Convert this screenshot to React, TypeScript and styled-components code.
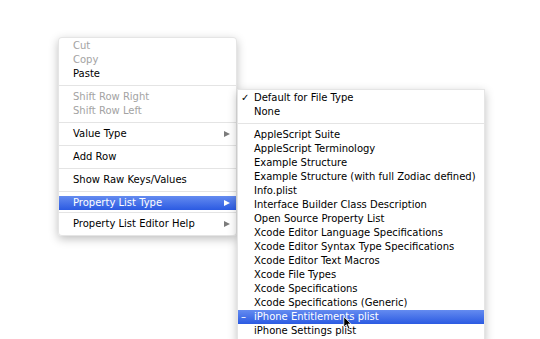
import styled, { createGlobalStyle } from "styled-components";

const GlobalStyle = createGlobalStyle`
  html, body {
    margin: 0;
    padding: 0;
    background: #fff;
  }
  body {
    font-family: "DejaVu Sans", Verdana, sans-serif;
  }
`;

type Entry =
  | { kind: "sep"; tight?: boolean }
  | {
      kind: "item";
      label: string;
      disabled?: boolean;
      active?: boolean;
      submenu?: boolean;
      mark?: string;
    };

const editMenu: Entry[] = [
  { kind: "item", label: "Cut", disabled: true },
  { kind: "item", label: "Copy", disabled: true },
  { kind: "item", label: "Paste" },
  { kind: "sep" },
  { kind: "item", label: "Shift Row Right", disabled: true },
  { kind: "item", label: "Shift Row Left", disabled: true },
  { kind: "sep" },
  { kind: "item", label: "Value Type", submenu: true },
  { kind: "sep" },
  { kind: "item", label: "Add Row" },
  { kind: "sep" },
  { kind: "item", label: "Show Raw Keys/Values" },
  { kind: "sep" },
  { kind: "item", label: "Property List Type", submenu: true, active: true },
  { kind: "sep", tight: true },
  { kind: "item", label: "Property List Editor Help", submenu: true },
];

const typeMenu: Entry[] = [
  { kind: "item", label: "Default for File Type", mark: "✓" },
  { kind: "item", label: "None" },
  { kind: "sep" },
  { kind: "item", label: "AppleScript Suite" },
  { kind: "item", label: "AppleScript Terminology" },
  { kind: "item", label: "Example Structure" },
  { kind: "item", label: "Example Structure (with full Zodiac defined)" },
  { kind: "item", label: "Info.plist" },
  { kind: "item", label: "Interface Builder Class Description" },
  { kind: "item", label: "Open Source Property List" },
  { kind: "item", label: "Xcode Editor Language Specifications" },
  { kind: "item", label: "Xcode Editor Syntax Type Specifications" },
  { kind: "item", label: "Xcode Editor Text Macros" },
  { kind: "item", label: "Xcode File Types" },
  { kind: "item", label: "Xcode Specifications" },
  { kind: "item", label: "Xcode Specifications (Generic)" },
  { kind: "item", label: "iPhone Entitlements plist", mark: "–", active: true },
  { kind: "item", label: "iPhone Settings plist" },
];

export default function App() {
  return (
    <>
      <GlobalStyle />
      <Stage>
        <Menu $x={58} $y={37} $w={179} $round>
          {editMenu.map((e, i) =>
            e.kind === "sep" ? (
              <Separator key={i} $tight={e.tight} />
            ) : (
              <Item key={i} $disabled={e.disabled} $active={e.active} $pad={14}>
                <Label>{e.label}</Label>
                {e.submenu && <Arrow $active={e.active} />}
              </Item>
            )
          )}
        </Menu>
        <Menu $x={237} $y={89} $w={248}>
          {typeMenu.map((e, i) =>
            e.kind === "sep" ? (
              <Separator key={i} />
            ) : (
              <Item key={i} $active={e.active} $pad={3}>
                <Mark>{e.mark}</Mark>
                <Label>{e.label}</Label>
              </Item>
            )
          )}
        </Menu>
        <Cursor viewBox="0 0 12 19" width="9" height="14">
          <path
            d="M1 1 L1 15 L4.5 11.8 L7 17.5 L9.2 16.5 L6.8 11 L11 11 Z"
            fill="#000"
            stroke="#fff"
            strokeWidth="1"
            strokeLinejoin="round"
          />
        </Cursor>
      </Stage>
    </>
  );
}

const Stage = styled.div`
  position: relative;
  width: 540px;
  height: 339px;
  overflow: hidden;
  background: #fff;
`;

const Menu = styled.ul<{ $x: number; $y: number; $w: number; $round?: boolean }>`
  position: absolute;
  left: ${(p) => p.$x}px;
  top: ${(p) => p.$y}px;
  width: ${(p) => p.$w}px;
  box-sizing: border-box;
  margin: 0;
  padding: 1px 0 4px;
  list-style: none;
  background: rgba(255, 255, 255, 0.98);
  border: 1px solid rgba(0, 0, 0, 0.1);
  border-radius: ${(p) => (p.$round ? "4px" : "0 0 4px 4px")};
  box-shadow: 0 3px 10px rgba(0, 0, 0, 0.25);
`;

const Item = styled.li<{ $disabled?: boolean; $active?: boolean; $pad: number }>`
  display: flex;
  align-items: center;
  height: 14px;
  padding: 0 6px 0 ${(p) => p.$pad}px;
  font-size: 10px;
  line-height: 14px;
  white-space: nowrap;
  color: ${(p) => (p.$active ? "#fff" : p.$disabled ? "#a3a3a3" : "#000")};
  background: ${(p) =>
    p.$active ? "linear-gradient(#648bf0, #2b5ae2)" : "transparent"};
`;

const Label = styled.span`
  flex: 1;
`;

const Mark = styled.span`
  width: 13px;
  flex-shrink: 0;
  font-size: 10px;
`;

const Arrow = styled.span<{ $active?: boolean }>`
  width: 0;
  height: 0;
  border-left: 6px solid ${(p) => (p.$active ? "#fff" : "#7b7b7b")};
  border-top: 3.5px solid transparent;
  border-bottom: 3.5px solid transparent;
`;

const Separator = styled.li<{ $tight?: boolean }>`
  height: 1px;
  margin: ${(p) => (p.$tight ? "2px 0 4px" : "4px 0")};
  background: #e4e4e4;
`;

const Cursor = styled.svg`
  position: absolute;
  left: 343px;
  top: 316px;
`;
